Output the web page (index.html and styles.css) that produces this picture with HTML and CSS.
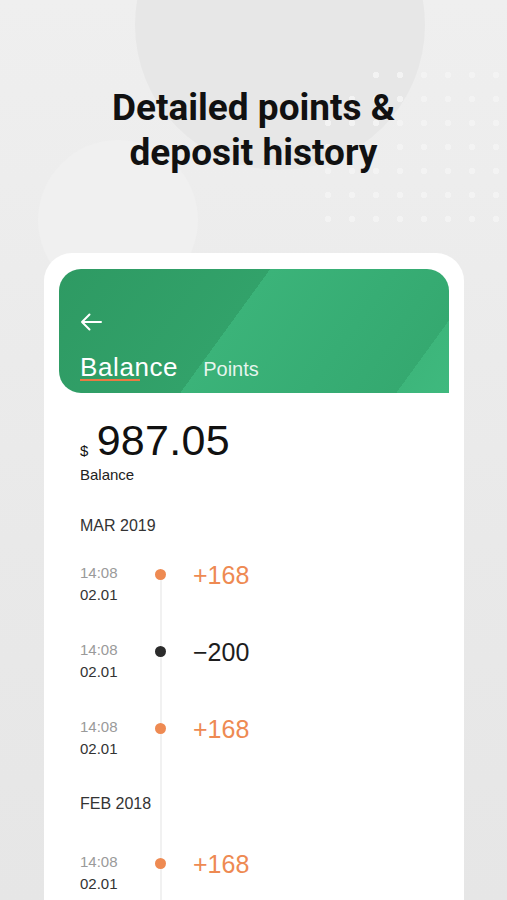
FILE: index.html
```html
<!DOCTYPE html>
<html lang="en">
<head>
    <meta charset="UTF-8">
    <meta name="viewport" content="width=device-width, initial-scale=1.0">
    <title>Balance History</title>
    <link rel="stylesheet" href="styles.css">
</head>
<body>
    <div class="backdrop">
        <div class="blob blob-big"></div>
        <div class="blob blob-left"></div>
        <div class="dots"></div>
    </div>

    <h1 class="title">Detailed points &amp;<br>deposit history</h1>

    <div class="phone">
        <div class="header">
            <svg class="back" width="22" height="18" viewBox="0 0 22 18">
                <path d="M21 9H2M9.5 1.5L2 9l7.5 7.5" fill="none" stroke="#fff" stroke-width="2" stroke-linecap="round" stroke-linejoin="round"/>
            </svg>
            <div class="tabs">
                <span class="tab active">Balance</span>
                <span class="tab">Points</span>
            </div>
        </div>

        <div class="summary">
            <div class="amount"><span class="currency">$</span>987.05</div>
            <div class="amount-label">Balance</div>
        </div>

        <div class="history">
            <div class="month first">MAR 2019</div>
            <div class="row">
                <div class="when"><span class="time">14:08</span><span class="date">02.01</span></div>
                <span class="dot"></span>
                <span class="value plus">+168</span>
            </div>
            <div class="row">
                <div class="when"><span class="time">14:08</span><span class="date">02.01</span></div>
                <span class="dot dark"></span>
                <span class="value">&minus;200</span>
            </div>
            <div class="row">
                <div class="when"><span class="time">14:08</span><span class="date">02.01</span></div>
                <span class="dot"></span>
                <span class="value plus">+168</span>
            </div>
            <div class="month">FEB 2018</div>
            <div class="row">
                <div class="when"><span class="time">14:08</span><span class="date">02.01</span></div>
                <span class="dot"></span>
                <span class="value plus">+168</span>
            </div>
        </div>
    </div>
</body>
</html>
```

FILE: styles.css
```css
body {
    margin: 0;
    height: 900px;
    overflow: hidden;
    position: relative;
    background-color: #ebebeb;
    font-family: "Liberation Sans", Arial, sans-serif;
}

/* soft background shapes */
.backdrop {
    position: absolute;
    inset: 0;
    z-index: 0;
    background: linear-gradient(180deg, #efefef 0%, #e9e9e9 60%, #e6e6e6 100%);
}

.blob {
    position: absolute;
    border-radius: 50%;
}

.blob-big {
    left: 135px;
    top: -120px;
    width: 290px;
    height: 290px;
    background: #e7e7e7;
}

.blob-left {
    left: 38px;
    top: 140px;
    width: 160px;
    height: 160px;
    background: #f0f0f0;
}

.dots {
    position: absolute;
    left: 314px;
    top: 63px;
    width: 193px;
    height: 170px;
    background-image: radial-gradient(circle, #f3f3f3 3px, transparent 3.5px);
    background-size: 24px 24px;
    background-position: 2px 0;
    clip-path: polygon(35% 0, 100% 0, 100% 100%, 0 100%, 0 40%);
}

.title {
    position: relative;
    z-index: 1;
    margin: 0;
    padding-top: 85px;
    text-align: center;
    font-family: Roboto, sans-serif;
    font-weight: 700;
    font-size: 37px;
    line-height: 45px;
    color: #111;
}

.phone {
    position: relative;
    z-index: 1;
    margin: 78px 43px 0 44px;
    height: 660px;
    padding: 16px 15px 0;
    background-color: #fff;
    border-radius: 28px 28px 0 0;
}

.header {
    height: 124px;
    box-sizing: border-box;
    padding: 44px 21px 0;
    border-radius: 22px 22px 0 22px;
    background: linear-gradient(126deg, #2e9a63 0%, #32a26a 44%, #3bb379 44%, #37ad74 70%, #35a970 89%, #3db67b 89%, #3fb97e 100%);
    color: #fff;
}

.back {
    display: block;
}

.tabs {
    display: flex;
    align-items: baseline;
    gap: 25px;
    margin-top: 21px;
}

.tab {
    font-size: 20px;
    color: rgba(255, 255, 255, 0.88);
}

.tab.active {
    position: relative;
    font-size: 26px;
    letter-spacing: 0.6px;
    color: #fff;
}

.tab.active::after {
    content: "";
    position: absolute;
    left: 0;
    top: 27px;
    width: 60px;
    height: 2px;
    background-color: #ec7a44;
}

.summary {
    padding: 33px 21px 0;
}

.amount {
    font-size: 43px;
    line-height: 28px;
    color: #111;
    letter-spacing: 0.3px;
}

.currency {
    font-size: 15px;
    margin-right: 8px;
    vertical-align: -1px;
}

.amount-label {
    font-size: 15px;
    line-height: 20px;
    color: #222;
}

.history {
    position: relative;
    padding: 30px 21px 0;
}

.history::before {
    content: "";
    position: absolute;
    left: 101px;
    top: 90px;
    bottom: -200px;
    width: 2px;
    background-color: #f1f1f1;
}

.month {
    position: relative;
    font-size: 16px;
    line-height: 22px;
    color: #333;
    margin: 0 0 36px;
}

.month.first {
    margin-bottom: 25px;
}

.row {
    position: relative;
    display: grid;
    grid-template-columns: 75px 11px auto;
    align-items: start;
    height: 77px;
}

.when {
    display: flex;
    flex-direction: column;
    font-size: 15px;
    line-height: 22px;
}

.time {
    color: #9a9a9a;
}

.date {
    color: #333;
}

.dot {
    width: 11px;
    height: 11px;
    margin-top: 7px;
    border-radius: 50%;
    background-color: #ee8a52;
}

.dot.dark {
    background-color: #2b2b2b;
}

.value {
    margin-left: 27px;
    font-size: 25px;
    line-height: 26px;
    color: #1d1d1d;
}

.value.plus {
    color: #ee8a52;
}
```
